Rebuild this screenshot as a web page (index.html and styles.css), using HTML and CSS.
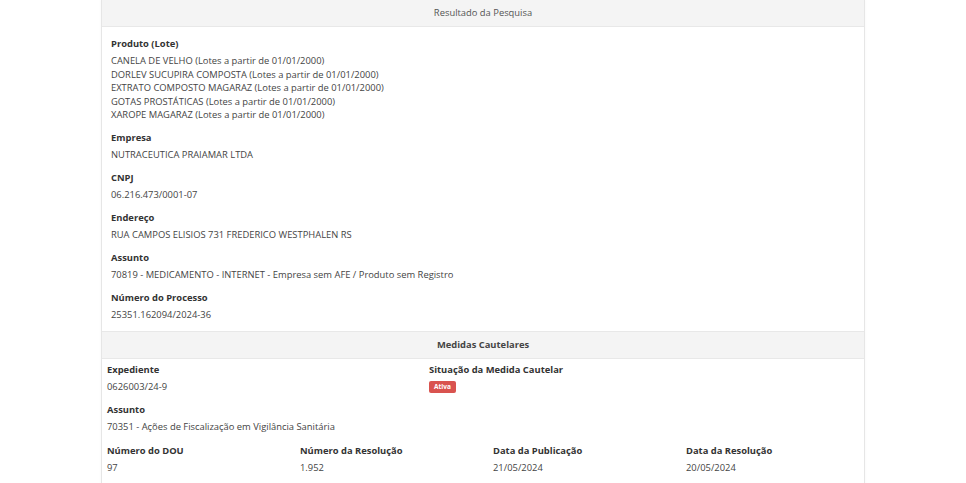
FILE: index.html
```html
<!DOCTYPE html>
<html lang="pt-BR">
<head>
<meta charset="utf-8">
<title>Resultado da Pesquisa</title>
<link rel="stylesheet" href="styles.css">
</head>
<body>
<div class="panel">
  <div class="panel-heading">Resultado da Pesquisa</div>
  <div class="panel-body">
    <div class="field">
      <div class="label">Produto (Lote)</div>
      <div class="value">CANELA DE VELHO (Lotes a partir de 01/01/2000)</div>
      <div class="value">DORLEV SUCUPIRA COMPOSTA (Lotes a partir de 01/01/2000)</div>
      <div class="value">EXTRATO COMPOSTO MAGARAZ (Lotes a partir de 01/01/2000)</div>
      <div class="value">GOTAS PROSTÁTICAS (Lotes a partir de 01/01/2000)</div>
      <div class="value">XAROPE MAGARAZ (Lotes a partir de 01/01/2000)</div>
    </div>
    <div class="field">
      <div class="label">Empresa</div>
      <div class="value">NUTRACEUTICA PRAIAMAR LTDA</div>
    </div>
    <div class="field">
      <div class="label">CNPJ</div>
      <div class="value">06.216.473/0001-07</div>
    </div>
    <div class="field">
      <div class="label">Endereço</div>
      <div class="value">RUA CAMPOS ELISIOS 731 FREDERICO WESTPHALEN RS</div>
    </div>
    <div class="field">
      <div class="label">Assunto</div>
      <div class="value">70819 - MEDICAMENTO - INTERNET - Empresa sem AFE / Produto sem Registro</div>
    </div>
    <div class="field last">
      <div class="label">Número do Processo</div>
      <div class="value">25351.162094/2024-36</div>
    </div>
  </div>
  <div class="panel-heading sub">Medidas Cautelares</div>
  <div class="medidas">
    <div class="row two">
      <div class="field">
        <div class="label">Expediente</div>
        <div class="value">0626003/24-9</div>
      </div>
      <div class="field">
        <div class="label">Situação da Medida Cautelar</div>
        <div class="value"><span class="badge">Ativa</span></div>
      </div>
    </div>
    <div class="field">
      <div class="label">Assunto</div>
      <div class="value">70351 - Ações de Fiscalização em Vigilância Sanitária</div>
    </div>
    <div class="row four">
      <div class="field">
        <div class="label">Número do DOU</div>
        <div class="value">97</div>
      </div>
      <div class="field">
        <div class="label">Número da Resolução</div>
        <div class="value">1.952</div>
      </div>
      <div class="field">
        <div class="label">Data da Publicação</div>
        <div class="value">21/05/2024</div>
      </div>
      <div class="field">
        <div class="label">Data da Resolução</div>
        <div class="value">20/05/2024</div>
      </div>
    </div>
  </div>
</div>
</body>
</html>
```

FILE: styles.css
```css
html, body {
  margin: 0;
  padding: 0;
  background: #ffffff;
}

body {
  font-family: "Open Sans", "Noto Sans", "Liberation Sans", sans-serif;
  font-size: 9.4px;
  color: #444444;
}

.panel {
  width: 762px;
  margin: 0 auto;
  border-left: 1px solid #e6e6e6;
  border-right: 1px solid #e6e6e6;
  box-shadow: 0 0 3px rgba(0, 0, 0, 0.04);
  min-height: 483px;
}

.panel-heading {
  height: 26px;
  line-height: 26px;
  background: #f4f4f4;
  border-bottom: 1px solid #e8e8e8;
  text-align: center;
  color: #555555;
  font-size: 9.4px;
}

.panel-heading.sub {
  height: 26px;
  border-top: 1px solid #e8e8e8;
  font-weight: 700;
  color: #444444;
}

.panel-body {
  padding: 10px 9px 9px 9px;
}

.field {
  margin-bottom: 9.5px;
}

.field.last {
  margin-bottom: 0;
}

.label {
  font-weight: 700;
  color: #333333;
  line-height: 14px;
  margin-bottom: 3px;
}

.value {
  line-height: 13.5px;
  color: #444444;
}

.medidas {
  padding: 4px 5px 0 5px;
}

.medidas .field {
  margin-bottom: 10.25px;
}

.row {
  display: grid;
}

.row.two {
  grid-template-columns: 322px 1fr;
}

.row.four {
  grid-template-columns: repeat(4, 193px);
}

.badge {
  display: inline-block;
  background: #d9534f;
  color: #ffffff;
  font-size: 6.5px;
  font-weight: 700;
  line-height: 12px;
  padding: 0 5px;
  border-radius: 2px;
  vertical-align: middle;
}
```
